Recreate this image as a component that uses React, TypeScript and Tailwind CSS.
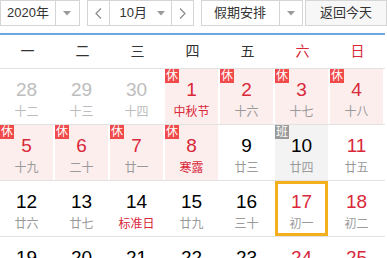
import React from 'react';

type Day = {
  n: number;
  lunar: string;
  tone: 'gray' | 'black' | 'red';
  lunarRed?: boolean;
  badge?: '休' | '班';
  bg?: 'pink' | 'gray';
  today?: boolean;
};

const days: Day[] = [
  { n: 28, lunar: '十二', tone: 'gray' },
  { n: 29, lunar: '十三', tone: 'gray' },
  { n: 30, lunar: '十四', tone: 'gray' },
  { n: 1, lunar: '中秋节', tone: 'red', lunarRed: true, badge: '休', bg: 'pink' },
  { n: 2, lunar: '十六', tone: 'red', badge: '休', bg: 'pink' },
  { n: 3, lunar: '十七', tone: 'red', badge: '休', bg: 'pink' },
  { n: 4, lunar: '十八', tone: 'red', badge: '休', bg: 'pink' },
  { n: 5, lunar: '十九', tone: 'red', badge: '休', bg: 'pink' },
  { n: 6, lunar: '二十', tone: 'red', badge: '休', bg: 'pink' },
  { n: 7, lunar: '廿一', tone: 'red', badge: '休', bg: 'pink' },
  { n: 8, lunar: '寒露', tone: 'red', lunarRed: true, badge: '休', bg: 'pink' },
  { n: 9, lunar: '廿三', tone: 'black' },
  { n: 10, lunar: '廿四', tone: 'black', badge: '班', bg: 'gray' },
  { n: 11, lunar: '廿五', tone: 'red' },
  { n: 12, lunar: '廿六', tone: 'black' },
  { n: 13, lunar: '廿七', tone: 'black' },
  { n: 14, lunar: '标准日', tone: 'black', lunarRed: true },
  { n: 15, lunar: '廿九', tone: 'black' },
  { n: 16, lunar: '三十', tone: 'black' },
  { n: 17, lunar: '初一', tone: 'red', today: true },
  { n: 18, lunar: '初二', tone: 'red' },
  { n: 19, lunar: '初三', tone: 'black' },
  { n: 20, lunar: '初四', tone: 'black' },
  { n: 21, lunar: '初五', tone: 'black' },
  { n: 22, lunar: '初六', tone: 'black' },
  { n: 23, lunar: '初七', tone: 'black' },
  { n: 24, lunar: '初八', tone: 'red' },
  { n: 25, lunar: '初九', tone: 'red' },
];

const weekdays = ['一', '二', '三', '四', '五', '六', '日'];

const Caret = () => (
  <svg width="8" height="5" viewBox="0 0 8 5">
    <path d="M0 0h8L4 4.5z" fill="#9a9a9a" />
  </svg>
);

const Chevron = ({ dir }: { dir: 'left' | 'right' }) => (
  <svg width="7" height="11" viewBox="0 0 7 11">
    <path
      d={dir === 'left' ? 'M6 0.5L1 5.5l5 5' : 'M1 0.5l5 5-5 5'}
      fill="none"
      stroke="#8a8a8a"
      strokeWidth="1.2"
    />
  </svg>
);

const DayCell = ({ d }: { d: Day }) => {
  const numColor =
    d.tone === 'gray' ? 'text-[#bdbdbd]' : d.tone === 'red' ? 'text-[#d9283a]' : 'text-[#000]';
  const lunarColor = d.lunarRed
    ? 'text-[#d9283a]'
    : d.tone === 'gray'
    ? 'text-[#bdbdbd]'
    : 'text-[#9a9a9a]';
  const bg =
    d.bg === 'pink' ? 'bg-[#fdeeee]' : d.bg === 'gray' ? 'bg-[#f3f3f3]' : 'bg-white';

  return (
    <div className="h-[55px] pr-[2px]">
      <div
        className={`relative flex h-full flex-col items-center ${bg} ${
          d.today ? 'border-[3px] border-[#f3b01c] pt-[8px]' : 'pt-[11px]'
        }`}
      >
        {d.badge && (
          <span
            className={`absolute left-0 top-0 flex h-[14px] w-[14px] items-center justify-center text-[12px] leading-none text-white ${
              d.badge === '休' ? 'bg-[#f04a4a]' : 'bg-[#9a9a9a]'
            }`}
          >
            {d.badge}
          </span>
        )}
        <span className={`text-[19px] leading-[20px] ${numColor}`}>{d.n}</span>
        <span className={`mt-[5px] text-[12px] leading-[14px] ${lunarColor}`}>{d.lunar}</span>
      </div>
    </div>
  );
};

export default function App() {
  const rows = [0, 1, 2, 3].map((r) => days.slice(r * 7, r * 7 + 7));

  return (
    <div
      className="h-[258px] w-[387px] overflow-hidden bg-white text-[#333]"
      style={{ fontFamily: '"Liberation Sans", "Noto Sans CJK SC", sans-serif' }}
    >
      <div className="flex h-[26px] items-stretch text-[13px]">
        <div className="flex w-[80px] border border-[#d5d5d5]">
          <span className="flex w-[55px] items-center justify-center border-r border-[#d5d5d5]">
            2020年
          </span>
          <span className="flex flex-1 items-center justify-center">
            <Caret />
          </span>
        </div>

        <div className="ml-[7px] flex w-[107px] border border-[#d5d5d5]">
          <span className="flex w-[22px] items-center justify-center border-r border-[#d5d5d5]">
            <Chevron dir="left" />
          </span>
          <span className="flex w-[62px] items-center justify-center gap-[10px] border-r border-[#d5d5d5] pl-[4px]">
            10月
            <Caret />
          </span>
          <span className="flex flex-1 items-center justify-center">
            <Chevron dir="right" />
          </span>
        </div>

        <div className="ml-[7px] flex w-[103px] border border-[#d5d5d5]">
          <span className="flex w-[78px] items-center justify-center border-r border-[#d5d5d5]">
            假期安排
          </span>
          <span className="flex flex-1 items-center justify-center">
            <Caret />
          </span>
        </div>

        <button className="ml-[2px] flex w-[82px] items-center justify-center border border-[#d5d5d5] bg-[#f7f7f7] text-[13px] text-[#333]">
          返回今天
        </button>
      </div>

      <div className="mt-[7px] w-[385px] border-t-2 border-[#6ea6df]">
        <div className="grid h-[34px] grid-cols-7 border-b border-[#e2e2e2] text-[14px]">
          {weekdays.map((w, i) => (
            <span
              key={w}
              className={`flex items-center justify-center ${
                i >= 5 ? 'text-[#d9283a]' : 'text-[#333]'
              }`}
            >
              {w}
            </span>
          ))}
        </div>

        {rows.map((row, ri) => (
          <div key={ri} className="grid grid-cols-7 border-b border-[#e2e2e2]">
            {row.map((d) => (
              <DayCell key={`${ri}-${d.n}`} d={d} />
            ))}
          </div>
        ))}
      </div>
    </div>
  );
}
